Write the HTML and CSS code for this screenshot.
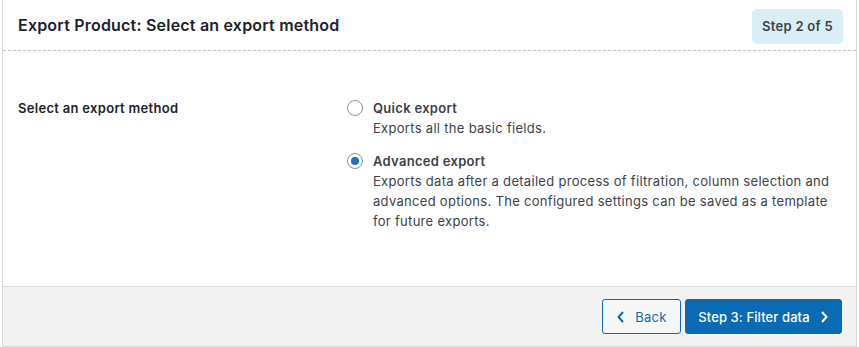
FILE: index.html
```html
<!DOCTYPE html>
<html lang="en">
<head>
    <meta charset="UTF-8">
    <title>Export Product</title>
    <link rel="stylesheet" href="styles.css">
</head>
<body>
    <div class="card">
        <div class="header">
            <h2 class="title">Export Product: Select an export method</h2>
            <span class="step">Step 2 of 5</span>
        </div>
        <div class="body">
            <div class="label">Select an export method</div>
            <div class="options">
                <label class="option">
                    <span class="radio"></span>
                    <span class="text">
                        <span class="name">Quick export</span>
                        <span class="desc">Exports all the basic fields.</span>
                    </span>
                </label>
                <label class="option">
                    <span class="radio checked"></span>
                    <span class="text">
                        <span class="name">Advanced export</span>
                        <span class="desc">Exports data after a detailed process of filtration, column selection and advanced options. The configured settings can be saved as a template for future exports.</span>
                    </span>
                </label>
            </div>
        </div>
        <div class="footer">
            <a class="btn btn-back">
                <svg width="10" height="12" viewBox="0 0 10 12"><path d="M7 1 L2.5 6 L7 11" fill="none" stroke="currentColor" stroke-width="2"/></svg>
                Back
            </a>
            <a class="btn btn-next">
                Step 3: Filter data
                <svg width="10" height="12" viewBox="0 0 10 12"><path d="M3 1 L7.5 6 L3 11" fill="none" stroke="currentColor" stroke-width="2"/></svg>
            </a>
        </div>
    </div>
</body>
</html>
```

FILE: styles.css
```css
*{
    margin: 0;
    padding: 0;
    box-sizing: border-box;
}
body{
    font-family: Inter, "Noto Sans", sans-serif;
    font-size: 13px;
    letter-spacing: 0.3px;
    color: #3c434a;
    background: #fff;
    padding: 0 2px;
}
.card{
    border: 1px solid #dcdcde;
    border-top: none;
    background: #fff;
    height: 347px;
    display: flex;
    flex-direction: column;
}
.header{
    height: 51px;
    border-bottom: 1px dashed #c3c4c7;
    display: flex;
    align-items: center;
    justify-content: space-between;
    padding: 0 13px 0 15px;
}
.title{
    font-size: 16px;
    font-weight: 600;
    letter-spacing: 0.2px;
    color: #1d2327;
}
.step{
    background: #d9eef5;
    border-radius: 5px;
    font-weight: 600;
    font-size: 13px;
    color: #3c434a;
    height: 35px;
    line-height: 35px;
    padding: 0 10px;
    margin-top: 3px;
}
.body{
    flex: 1;
    display: flex;
    padding: 47px 15px 0;
}
.label{
    width: 329px;
    font-weight: 600;
    color: #1d2327;
    line-height: 20px;
}
.options{
    flex: 1;
    display: flex;
    flex-direction: column;
    gap: 13px;
}
.option{
    display: flex;
    gap: 10px;
}
.radio{
    width: 16px;
    height: 16px;
    border: 1px solid #8c8f94;
    border-radius: 50%;
    margin-top: 2px;
    flex: none;
    position: relative;
}
.radio.checked::after{
    content: "";
    position: absolute;
    left: 3px;
    top: 3px;
    width: 8px;
    height: 8px;
    border-radius: 50%;
    background: #1e73be;
}
.text{
    display: flex;
    flex-direction: column;
    line-height: 20px;
}
.name{
    font-weight: 600;
    color: #3c434a;
}
.desc{
    color: #3c434a;
}
.footer{
    height: 60px;
    background: #f3f3f3;
    border-top: 1px solid #dcdcde;
    display: flex;
    justify-content: flex-end;
    align-items: center;
    gap: 4px;
    padding: 0 14px;
}
.btn{
    height: 35px;
    display: flex;
    align-items: center;
    justify-content: center;
    gap: 9px;
    border-radius: 3px;
    font-size: 13px;
    white-space: nowrap;
    cursor: pointer;
}
.btn-back{
    width: 79px;
    border: 1px solid #0c6bb5;
    color: #0c6bb5;
    background: #f6f7f7;
}
.btn-next{
    width: 157px;
    background: #0a6ab4;
    border: 1px solid #0a6ab4;
    color: #fff;
    font-weight: 500;
    letter-spacing: 0.1px;
}
```
